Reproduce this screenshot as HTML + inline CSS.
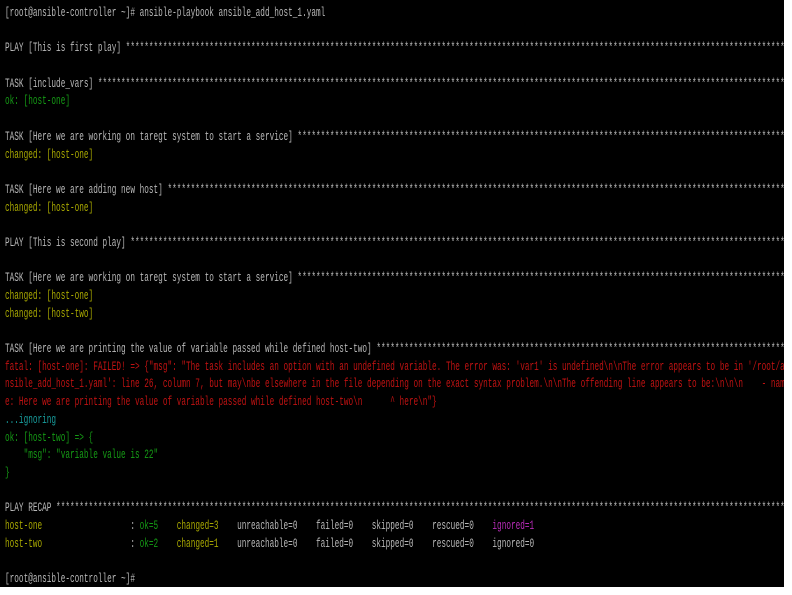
<!DOCTYPE html>
<html><head><meta charset="utf-8"><style>
html,body{margin:0;padding:0;background:#fff;width:792px;height:595px;overflow:hidden}
#term{position:absolute;left:0;top:0;width:784px;height:587px;background:#000;overflow:hidden}
#inner{position:absolute;left:5px;top:4px;width:1310px;transform:scaleX(0.595);transform-origin:0 0;
font-family:"Liberation Mono",monospace;font-size:13px;line-height:17.7px;color:#b8b8b8;overflow:hidden}
.l{height:17.7px;overflow:hidden;white-space:pre}
.g{color:#159a15}.y{color:#a8a800}.r{color:#c01212}.c{color:#189e9e}.m{color:#b82cb8}
</style></head><body><div id="term"><div id="inner">
<div class="l">[root@ansible-controller ~]# ansible-playbook ansible_add_host_1.yaml</div>
<div class="l"> </div>
<div class="l">PLAY [This is first play] *****************************************************************************************************************************************************</div>
<div class="l"> </div>
<div class="l">TASK [include_vars] ***********************************************************************************************************************************************************</div>
<div class="l g">ok: [host-one]</div>
<div class="l"> </div>
<div class="l">TASK [Here we are working on taregt system to start a service] ****************************************************************************************************************</div>
<div class="l y">changed: [host-one]</div>
<div class="l"> </div>
<div class="l">TASK [Here we are adding new host] ********************************************************************************************************************************************</div>
<div class="l y">changed: [host-one]</div>
<div class="l"> </div>
<div class="l">PLAY [This is second play] ****************************************************************************************************************************************************</div>
<div class="l"> </div>
<div class="l">TASK [Here we are working on taregt system to start a service] ****************************************************************************************************************</div>
<div class="l y">changed: [host-one]</div>
<div class="l y">changed: [host-two]</div>
<div class="l"> </div>
<div class="l">TASK [Here we are printing the value of variable passed while defined host-two] ***************************************************************************************************</div>
<div class="l r">fatal: [host-one]: FAILED! =&gt; {"msg": "The task includes an option with an undefined variable. The error was: 'var1' is undefined\n\nThe error appears to be in '/root/a</div>
<div class="l r">nsible_add_host_1.yaml': line 26, column 7, but may\nbe elsewhere in the file depending on the exact syntax problem.\n\nThe offending line appears to be:\n\n\n    - nam</div>
<div class="l r">e: Here we are printing the value of variable passed while defined host-two\n      ^ here\n"}</div>
<div class="l c">...ignoring</div>
<div class="l g">ok: [host-two] =&gt; {</div>
<div class="l g">    "msg": "variable value is 22"</div>
<div class="l g">}</div>
<div class="l"> </div>
<div class="l">PLAY RECAP ********************************************************************************************************************************************************************</div>
<div class="l"><span class="y">host-one</span>                   : <span class="g">ok=5</span>    <span class="y">changed=3</span>    unreachable=0    failed=0    skipped=0    rescued=0    <span class="m">ignored=1</span></div>
<div class="l"><span class="y">host-two</span>                   : <span class="g">ok=2</span>    <span class="y">changed=1</span>    unreachable=0    failed=0    skipped=0    rescued=0    ignored=0</div>
<div class="l"> </div>
<div class="l">[root@ansible-controller ~]#</div>
</div></div></body></html>
